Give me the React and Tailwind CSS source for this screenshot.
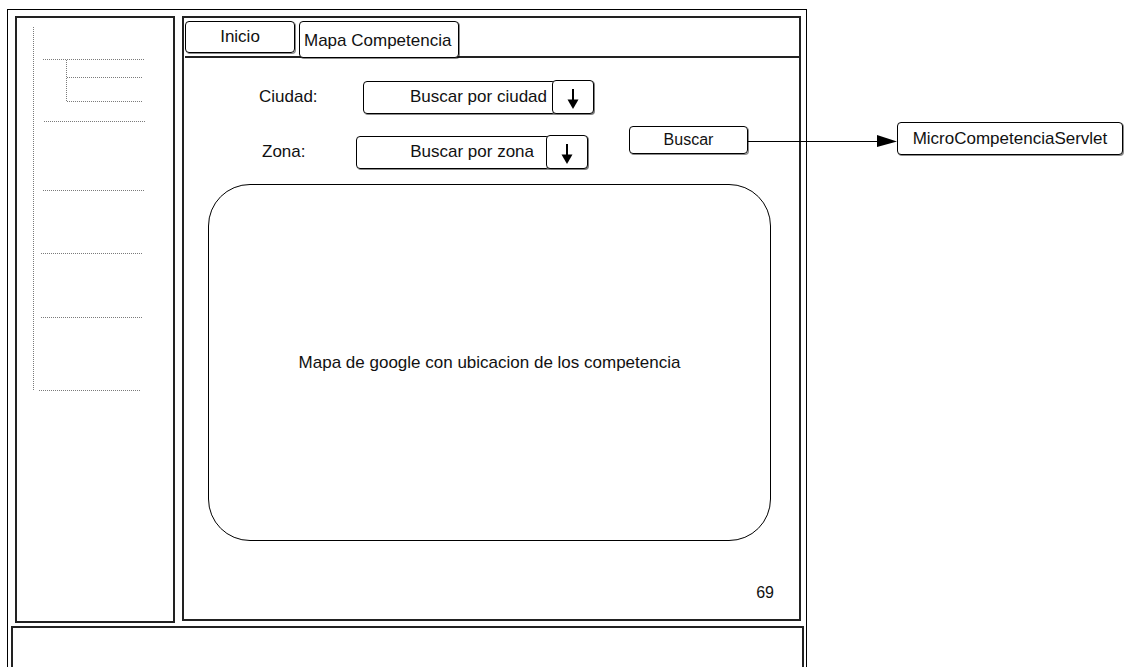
import React from 'react';

// lineas punteadas del arbol del menu lateral (coordenadas dentro del panel)
const TREE_LINES = [
  [16, 8, 16, 372],
  [25, 41, 126, 41],
  [49, 41, 49, 83],
  [49, 59, 124, 59],
  [49, 83, 124, 83],
  [26, 103, 127, 103],
  [25, 172, 126, 172],
  [23, 235, 124, 235],
  [23, 299, 124, 299],
  [21, 372, 122, 372],
];

const DownArrow = () => (
  <svg width="14" height="21" viewBox="0 0 14 21" className="shrink-0 translate-y-[2px]">
    <line x1="7" y1="0" x2="7" y2="12" stroke="#000" strokeWidth="2" />
    <polygon points="1.5,10.5 12.5,10.5 7,20" fill="#000" />
  </svg>
);

const Combo = ({ text, bodyW, pr }) => (
  <div className="flex items-center">
    <div
      className="h-[33px] border border-black rounded-[4px] flex items-center justify-end text-[17px] shadow-[1px_1px_0_rgba(0,0,0,0.45)]"
      style={{ width: bodyW, paddingRight: pr }}
    >
      {text}
    </div>
    <div className="-ml-[4px] w-[42px] h-[34px] bg-white border border-black rounded-[4px] flex items-center justify-center shadow-[1px_1px_0_rgba(0,0,0,0.5)]">
      <DownArrow />
    </div>
  </div>
);

const App = () => {
  return (
    <div className="relative w-[1125px] h-[667px] overflow-hidden bg-white text-[#111] font-['Liberation_Sans',Arial,sans-serif]">
      <div className="pl-[7px] pt-[9px]">
        <div className="w-[800px] h-[720px] border border-black pt-[6px]">
          <div className="flex items-start pl-[7px] gap-[7px]">
            {/* menu lateral */}
            <div className="w-[160px] h-[607px] border-2 border-[#222]">
              <svg width="156" height="400" shapeRendering="crispEdges">
                {TREE_LINES.map(([x1, y1, x2, y2], i) => (
                  <line
                    key={i}
                    x1={x1 + 0.5}
                    y1={y1 + 0.5}
                    x2={x2 + 0.5}
                    y2={y2 + 0.5}
                    stroke="#7a7a7a"
                    strokeDasharray="1 1"
                  />
                ))}
              </svg>
            </div>

            {/* contenido */}
            <div className="w-[619px] h-[605px] border-2 border-[#222] pt-[3px]">
              <div className="ml-[1px] h-[37px] flex items-start gap-[4px] border-b-2 border-[#222]">
                <div className="w-[110px] h-[32px] border border-black rounded-[4px] flex items-center justify-center text-[17px] shadow-[1px_1px_0_rgba(0,0,0,0.45)]">
                  Inicio
                </div>
                <div className="w-[160px] h-[37px] bg-white border border-black rounded-[4px] flex items-center pl-[4px] pt-[3px] text-[17px] shadow-[1px_1px_0_rgba(0,0,0,0.45)]">
                  Mapa Competencia
                </div>
              </div>

              <div className="mt-[22px] flex items-start">
                <div className="w-[410px] flex flex-col gap-[21px]">
                  <div className="flex items-center pl-[75px]">
                    <span className="w-[104px] text-[17px]">Ciudad:</span>
                    <Combo text="Buscar por ciudad" bodyW={193} pr={8} />
                  </div>
                  <div className="flex items-center pl-[78px]">
                    <span className="w-[94px] text-[17px]">Zona:</span>
                    <Combo text="Buscar por zona" bodyW={194} pr={15} />
                  </div>
                </div>
                <div className="ml-[35px] mt-[46px] w-[119px] h-[28px] border border-black rounded-[4px] flex items-center justify-center text-[16px] shadow-[1px_1px_0_rgba(0,0,0,0.45)]">
                  Buscar
                </div>
              </div>

              <div className="mt-[15px] ml-[24px] w-[563px] h-[357px] border-[1.5px] border-black rounded-[42px] flex items-center justify-center text-[17px]">
                Mapa de google con ubicacion de los competencia
              </div>

              <div className="mt-[44px] pr-[25px] flex justify-end text-[16px] leading-none">69</div>
            </div>
          </div>

          {/* pie */}
          <div className="mt-[3px] ml-[3px] w-[793px] h-[80px] border-2 border-[#222]"></div>
        </div>
      </div>

      {/* flecha hacia el servlet */}
      <svg className="absolute left-[740px] top-[130px]" width="160" height="22">
        <line x1="7" y1="11.5" x2="140" y2="11.5" stroke="#000" strokeWidth="1" />
        <polygon points="137,5 157,11.5 137,17" fill="#000" />
      </svg>
      <div className="absolute left-[897px] top-[122px] w-[226px] h-[33px] border border-black rounded-[4px] bg-white flex items-center justify-center text-[17px] shadow-[1px_1px_0_rgba(0,0,0,0.45)]">
        MicroCompetenciaServlet
      </div>
    </div>
  );
};

export default App;
